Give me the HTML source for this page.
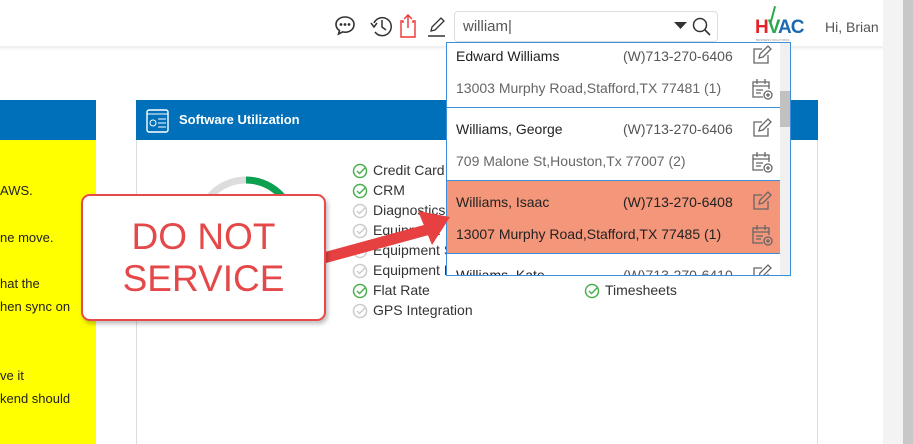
<!DOCTYPE html>
<html><head><meta charset="utf-8"><style>
*{margin:0;padding:0;box-sizing:border-box}
body{width:913px;height:444px;overflow:hidden;background:#fff;font-family:"Liberation Sans",sans-serif;position:relative}
.abs{position:absolute}
.hdr{left:0;top:0;width:883px;height:48px;background:#fff;border-bottom:2px solid #f0f0f0;box-shadow:0 1px 3px rgba(0,0,0,.05)}
.sb1{left:883px;top:0;width:20px;height:444px;background:#f3f3f3}
.sb2{left:903px;top:0;width:10px;height:444px;background:#c8c8c8}
.blue{background:#0070ba}
.yt{font-size:13px;color:#222}
.lst{font-size:14px;color:#333;line-height:20px}
.dd{left:446px;top:42px;width:345px;height:234px;border:1px solid #3a8fd8;background:#fff;overflow:hidden}
.it{position:absolute;left:0;width:333px;height:73px;border-bottom:1.5px solid #3a8fd8}
.nm{position:absolute;left:9px;top:13px;font-size:14px;color:#222}
.ph{position:absolute;left:176px;top:13px;font-size:14px;color:#555}
.ad{position:absolute;left:9px;top:45px;font-size:14px;color:#666}
</style></head><body>
<div class="abs hdr"></div>
<div class="abs sb1"></div><div class="abs sb2"></div>
<svg class="abs" style="left:334px;top:14px" width="115" height="26" viewBox="0 0 115 26">
<path d="M11 3C5.5 3 2 6.5 2 10.5c0 2.5 1.3 4.6 3.5 6L4.5 20l4.2-2.1c.8.2 1.5.3 2.3.3 5.5 0 9-3.5 9-7.7S16.5 3 11 3z" fill="none" stroke="#333" stroke-width="1.6"/>
<circle cx="7" cy="10.5" r="1.4" fill="#333"/><circle cx="11" cy="10.5" r="1.4" fill="#333"/><circle cx="15" cy="10.5" r="1.4" fill="#333"/>
<path d="M40 9a9 9 0 1 1 1 9" fill="none" stroke="#333" stroke-width="1.5"/><path d="M37 9l3 4 3-4" fill="none" stroke="#333" stroke-width="1.5"/><path d="M48 6v7l4 3" fill="none" stroke="#333" stroke-width="1.5"/>
<path d="M69 9v-2h-2v16h14v-16h-2v2" fill="none" stroke="#e33" stroke-width="1.4"/><path d="M74 1v13M70 5l4-4 4 4" fill="none" stroke="#e33" stroke-width="1.4"/>
<path d="M97 17l1-4 9-9 3 3-9 9z" fill="none" stroke="#333" stroke-width="1.3"/><path d="M94 22h17" stroke="#333" stroke-width="1.4"/>
</svg>
<div class="abs" style="left:454px;top:11px;width:264px;height:31px;border:1px solid #ddd;border-radius:4px;font-size:15px;color:#555;padding:6px 0 0 8px">william|</div>
<svg class="abs" style="left:672px;top:16px" width="44" height="22"><path d="M2 6h13l-6.5 7z" fill="#333"/><circle cx="28" cy="9" r="6.5" fill="none" stroke="#333" stroke-width="1.5"/><path d="M33 14l5 5" stroke="#333" stroke-width="1.6"/></svg>
<div class="abs" style="left:755px;top:18px;font-size:19px;font-weight:bold;letter-spacing:-1px;line-height:20px"><span style="color:#e3232a">H</span><span style="color:#2aa94a">V</span><span style="color:#1d6ab3">AC</span></div>
<div class="abs" style="left:772px;top:6px;width:2px;height:16px;background:#2aa94a;transform:rotate(15deg)"></div>
<div class="abs" style="left:756px;top:38px;font-size:3px;color:#888">BUSINESS SOLUTIONS</div>
<div class="abs" style="left:825px;top:19px;font-size:14px;color:#555">Hi, Brian</div>
<div class="abs blue" style="left:0;top:100px;width:96px;height:40px"></div>
<div class="abs" style="left:0;top:140px;width:96px;height:304px;background:#ffff00"></div>
<div class="abs yt" style="left:0;top:183px">AWS.</div>
<div class="abs yt" style="left:0;top:230px">ne move.</div>
<div class="abs yt" style="left:0;top:276px">hat the</div>
<div class="abs yt" style="left:0;top:299px">hen sync on</div>
<div class="abs yt" style="left:0;top:368px">ve it</div>
<div class="abs yt" style="left:0;top:391px">kend should</div>
<div class="abs blue" style="left:136px;top:100px;width:682px;height:40px"></div>
<div class="abs" style="left:136px;top:140px;width:682px;height:304px;border-left:1px solid #ddd;border-right:1px solid #ddd"></div>
<svg class="abs" style="left:146px;top:109px" width="24" height="24"><rect x="1" y="1" width="21" height="22" rx="2" fill="none" stroke="#fff" stroke-width="1.4"/><path d="M1 5h21" stroke="#fff"/><circle cx="7" cy="14" r="3" fill="none" stroke="#fff"/><path d="M12 10h8M12 14h8M12 18h8" stroke="#fff"/></svg>
<div class="abs" style="left:179px;top:112px;font-size:13px;font-weight:bold;color:#fff">Software Utilization</div>
<svg class="abs" style="left:190px;top:172px" width="112" height="112"><circle cx="56" cy="56" r="48" fill="none" stroke="#ddd" stroke-width="7"/><path d="M56 8a48 48 0 0 1 42 25" fill="none" stroke="#0aa050" stroke-width="7"/></svg>
<div class="abs lst" style="left:373px;top:160px">Credit Card<br>CRM<br>Diagnostics<br>Equipment<br>Equipment S<br>Equipment F<br>Flat Rate<br>GPS Integration</div>
<svg class="abs" style="left:352px;top:162px" width="18" height="160">
<g fill="none" stroke-width="1.5">
<g stroke="#4caf50"><circle cx="8" cy="9" r="6.5"/><path d="M5 9l2.5 2.5 6-6"/></g>
<g stroke="#4caf50" transform="translate(0,20)"><circle cx="8" cy="9" r="6.5"/><path d="M5 9l2.5 2.5 6-6"/></g>
<g stroke="#ccc" transform="translate(0,40)"><circle cx="8" cy="9" r="6.5"/><path d="M5 9l2.5 2.5 6-6"/></g>
<g stroke="#ccc" transform="translate(0,60)"><circle cx="8" cy="9" r="6.5"/><path d="M5 9l2.5 2.5 6-6"/></g>
<g stroke="#ccc" transform="translate(0,80)"><circle cx="8" cy="9" r="6.5"/><path d="M5 9l2.5 2.5 6-6"/></g>
<g stroke="#ccc" transform="translate(0,100)"><circle cx="8" cy="9" r="6.5"/><path d="M5 9l2.5 2.5 6-6"/></g>
<g stroke="#4caf50" transform="translate(0,120)"><circle cx="8" cy="9" r="6.5"/><path d="M5 9l2.5 2.5 6-6"/></g>
<g stroke="#ccc" transform="translate(0,140)"><circle cx="8" cy="9" r="6.5"/><path d="M5 9l2.5 2.5 6-6"/></g>
</g></svg>
<svg class="abs" style="left:584px;top:282px" width="18" height="18"><g fill="none" stroke="#4caf50" stroke-width="1.5"><circle cx="8" cy="9" r="6.5"/><path d="M5 9l2.5 2.5 6-6"/></g></svg>
<div class="abs lst" style="left:605px;top:280px">Timesheets</div>
<div class="abs dd">
<div class="it" style="top:-8px"><div class="nm">Edward Williams</div><div class="ph">(W)713-270-6406</div><div class="ad">13003 Murphy Road,Stafford,TX 77481 (1)</div></div>
<div class="it" style="top:65px"><div class="nm">Williams, George</div><div class="ph">(W)713-270-6406</div><div class="ad">709 Malone St,Houston,Tx 77007 (2)</div></div>
<div class="it" style="top:138px;background:#f4967a"><div class="nm">Williams, Isaac</div><div class="ph" style="color:#222">(W)713-270-6408</div><div class="ad" style="color:#222">13007 Murphy Road,Stafford,TX 77485 (1)</div></div>
<div class="it" style="top:211px;border:none"><div class="nm">Williams, Kate</div><div class="ph">(W)713-270-6410</div></div>
<div style="position:absolute;left:333px;top:0;width:11px;height:234px;background:#f0f0f0"></div>
<div style="position:absolute;left:333px;top:48px;width:11px;height:36px;background:#c1c1c1"></div>
<svg style="position:absolute;left:304px;top:0" width="24" height="240">
<g fill="none" stroke="#666" stroke-width="1.3">
<g transform="translate(0,0)"><path d="M11 6H3v14h14v-8"/><path d="M8 15l1-4 8-8 3 3-8 8z"/></g>
<g transform="translate(0,73)"><path d="M11 6H3v14h14v-8"/><path d="M8 15l1-4 8-8 3 3-8 8z"/></g>
<g transform="translate(0,146)"><path d="M11 6H3v14h14v-8"/><path d="M8 15l1-4 8-8 3 3-8 8z"/></g>
<g transform="translate(0,219)"><path d="M11 6H3v14h14v-8"/><path d="M8 15l1-4 8-8 3 3-8 8z"/></g>
<g transform="translate(0,33)"><path d="M12 21H2V6h16v7M2 10h16M6 3v5M14 3v5M5 14h7M5 17h5"/><circle cx="17" cy="19" r="4"/><path d="M17 17v4M15 19h4"/></g>
<g transform="translate(0,106)"><path d="M12 21H2V6h16v7M2 10h16M6 3v5M14 3v5M5 14h7M5 17h5"/><circle cx="17" cy="19" r="4"/><path d="M17 17v4M15 19h4"/></g>
<g transform="translate(0,179)"><path d="M12 21H2V6h16v7M2 10h16M6 3v5M14 3v5M5 14h7M5 17h5"/><circle cx="17" cy="19" r="4"/><path d="M17 17v4M15 19h4"/></g>
</g></svg>
</div>
<svg class="abs" style="left:318px;top:205px" width="140" height="70"><path d="M2 54L112 24" stroke="#e74040" stroke-width="11"/><path d="M100 6L132 12L114 40z" fill="#e74040"/></svg>
<div class="abs" style="left:81px;top:194px;width:245px;height:127px;border:2px solid #e74a4a;border-radius:9px;background:#fff;box-shadow:2px 3px 4px rgba(0,0,0,.25);text-align:center;color:#e54848;font-size:37px;line-height:42px;padding-top:20px">DO NOT<br>SERVICE</div>
</body></html>
